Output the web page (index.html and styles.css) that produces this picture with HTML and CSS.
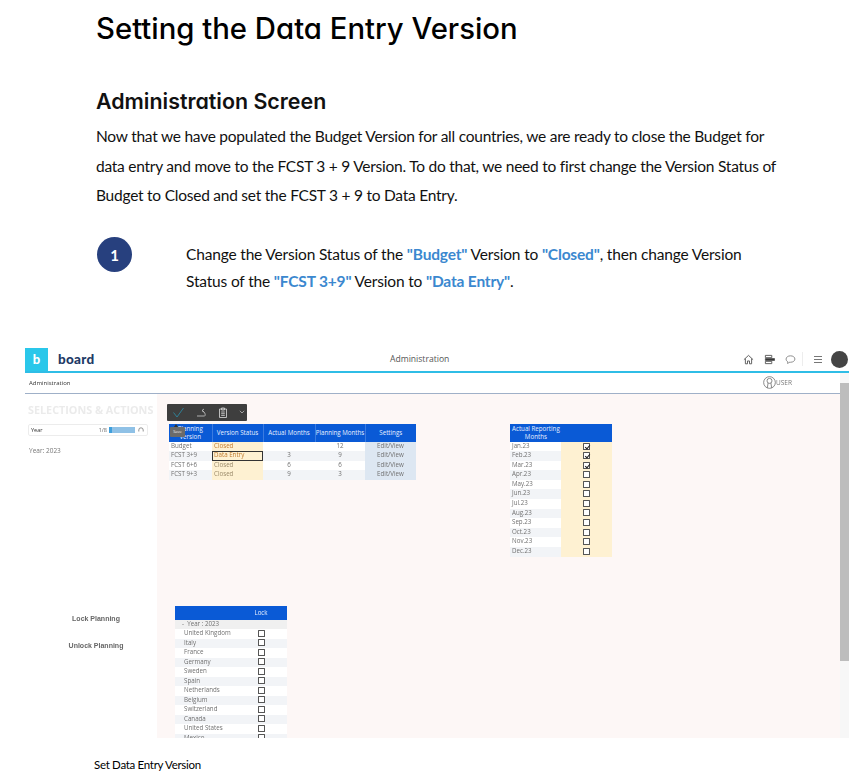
FILE: index.html
```html
<!DOCTYPE html>
<html lang="en">
<head>
    <meta charset="UTF-8">
    <meta name="viewport" content="width=device-width, initial-scale=1.0">
    <title>Setting the Data Entry Version</title>
    <link rel="stylesheet" href="styles.css">
</head>
<body>
    <div class="article">
        <h1>Setting the Data Entry Version</h1>
        <h2>Administration Screen</h2>
        <p class="intro">Now that we have populated the Budget Version for all countries, we are ready to close the Budget for data entry and move to the FCST 3 + 9 Version. To do that, we need to first change the Version Status of Budget to Closed and set the FCST 3 + 9 to Data Entry.</p>
        <div class="step">
            <div class="step-num">1</div>
            <p>Change the Version Status of the <b>"Budget"</b> Version to <b>"Closed"</b>, then change Version Status of the <b>"FCST 3+9"</b> Version to <b>"Data Entry"</b>.</p>
        </div>
    </div>

    <div class="shot">
        <div class="app-header">
            <div class="logo-box">b</div>
            <div class="logo-word">board</div>
            <div class="app-title">Administration</div>
            <div class="app-icons">
                <svg width="11" height="11" viewBox="0 0 12 12" fill="none" stroke="#555" stroke-width="1"><path d="M1 6.2 6 1.5l5 4.7M2.6 5v5.7h2.3V7.6h2.2v3.1h2.3V5"/></svg>
                <svg width="11" height="11" viewBox="0 0 12 12" fill="none" stroke="#555" stroke-width="1"><path d="M1.5 1.5h7v2.5h-7zM1.5 8h7v2.5h-7z"/><path d="M1.5 5h10v2h-10z" fill="#333"/></svg>
                <svg width="11" height="11" viewBox="0 0 12 12" fill="none" stroke="#777" stroke-width="0.9"><path d="M6 2c2.8 0 4.8 1.500 4.800 3.500S8.800 9 6 9H4.500L3 10.500V8.500C1.900 7.900 1.200 6.800 1.200 5.500 1.200 3.500 3.200 2 6 2z"/></svg>
                <span class="icon-sep"></span>
                <svg width="10" height="9" viewBox="0 0 10 9" fill="none" stroke="#777" stroke-width="1"><path d="M1 1.500h8M1 4.500h8M1 7.500h8"/></svg>
                <span class="avatar"></span>
            </div>
        </div>
        <div class="main-wrap">
            <div class="main-col">
                <div class="sub-bar">
                    <span>Administration</span>
                    <div class="user-tag">
                        <svg width="13" height="13" viewBox="0 0 12 12" fill="none" stroke="#666" stroke-width="0.7"><circle cx="6" cy="6" r="5.400"/><circle cx="6" cy="4.500" r="2.300"/><path d="M4.700 6.500 4 11M7.300 6.500 8 11"/></svg>
                        USER
                    </div>
                </div>
                <div class="dash">
                    <div class="side">
                        <div class="side-title">SELECTIONS &amp; ACTIONS</div>
                        <div class="selector">
                            <span class="sel-name">Year</span>
                            <span class="sel-count">1/8</span>
                            <span class="sel-bar"><i></i></span>
                            <svg width="6" height="6" viewBox="0 0 6 6" fill="none" stroke="#666" stroke-width="0.7"><path d="M0.800 4.500V3a2.200 2.200 0 0 1 4.400 0v1.500"/></svg>
                        </div>
                        <div class="sel-value">Year: 2023</div>
                        <div class="side-action first">Lock Planning</div>
                        <div class="side-action">Unlock Planning</div>
                    </div>
                    <div class="canvas">
                        <div class="canvas-left">
                            <div class="versions-wrap">
                                <div class="toolbar">
                                    <svg width="13" height="13" viewBox="0 0 13 13" fill="none" stroke="#2f7f95" stroke-width="1"><path d="M1.500 6.500 5 11l6.500-9"/></svg>
                                    <svg width="11" height="11" viewBox="0 0 11 11" fill="none" stroke="#bbb" stroke-width="0.9"><path d="M1 9h7.500c1 0 1-2.500-.5-4L6 3.500M6 3.500 8 2M6 3.500 8 5"/></svg>
                                    <svg width="10" height="11" viewBox="0 0 10 11" fill="none" stroke="#ccc" stroke-width="0.9"><path d="M1.500 2h7v8.500h-7zM3.500 1h3v2h-3zM3.200 5h3.600M3.200 6.700h3.600M3.200 8.400h3.600"/></svg>
                                    <svg width="6" height="4" viewBox="0 0 6 4" fill="none" stroke="#bbb" stroke-width="0.8"><path d="M0.800 0.800 3 3l2.200-2.200"/></svg>
                                </div>
                                <div class="tip">Save</div>
                                <table class="grid versions">
                                    <tr class="head"><th>Planning<br>Version</th><th>Version Status</th><th>Actual Months</th><th>Planning Months</th><th>Settings</th></tr>
                                    <tr><td>Budget</td><td class="status">Closed</td><td></td><td class="mid">12</td><td class="setting">Edit/View</td></tr>
                                    <tr class="alt"><td>FCST 3+9</td><td class="status active">Data Entry</td><td class="mid">3</td><td class="mid">9</td><td class="setting">Edit/View</td></tr>
                                    <tr><td>FCST 6+6</td><td class="status dim">Closed</td><td class="mid">6</td><td class="mid">6</td><td class="setting">Edit/View</td></tr>
                                    <tr class="alt"><td>FCST 9+3</td><td class="status dim">Closed</td><td class="mid">9</td><td class="mid">3</td><td class="setting">Edit/View</td></tr>
                                </table>
                            </div>
                            <table class="grid locks">
                                <tr class="head"><th></th><th>Lock</th></tr>
                                <tr class="year-row"><td colspan="2">- &nbsp;Year : 2023</td></tr>
                                <tr><td>United Kingdom</td><td class="mid"><span class="box"></span></td></tr>
                                <tr class="alt"><td>Italy</td><td class="mid"><span class="box"></span></td></tr>
                                <tr><td>France</td><td class="mid"><span class="box"></span></td></tr>
                                <tr class="alt"><td>Germany</td><td class="mid"><span class="box"></span></td></tr>
                                <tr><td>Sweden</td><td class="mid"><span class="box"></span></td></tr>
                                <tr class="alt"><td>Spain</td><td class="mid"><span class="box"></span></td></tr>
                                <tr><td>Netherlands</td><td class="mid"><span class="box"></span></td></tr>
                                <tr class="alt"><td>Belgium</td><td class="mid"><span class="box"></span></td></tr>
                                <tr><td>Switzerland</td><td class="mid"><span class="box"></span></td></tr>
                                <tr class="alt"><td>Canada</td><td class="mid"><span class="box"></span></td></tr>
                                <tr><td>United States</td><td class="mid"><span class="box"></span></td></tr>
                                <tr class="alt"><td>Mexico</td><td class="mid"><span class="box"></span></td></tr>
                            </table>
                        </div>
                        <table class="grid months">
                            <tr class="head"><th colspan="2"><span class="months-head">Actual Reporting<br>Months</span></th></tr>
                            <tr><td>Jan.23</td><td class="check"><span class="box on"></span></td></tr>
                            <tr class="alt"><td>Feb.23</td><td class="check"><span class="box on"></span></td></tr>
                            <tr><td>Mar.23</td><td class="check"><span class="box on"></span></td></tr>
                            <tr class="alt"><td>Apr.23</td><td class="check"><span class="box"></span></td></tr>
                            <tr><td>May.23</td><td class="check"><span class="box"></span></td></tr>
                            <tr class="alt"><td>Jun.23</td><td class="check"><span class="box"></span></td></tr>
                            <tr><td>Jul.23</td><td class="check"><span class="box"></span></td></tr>
                            <tr class="alt"><td>Aug.23</td><td class="check"><span class="box"></span></td></tr>
                            <tr><td>Sep.23</td><td class="check"><span class="box"></span></td></tr>
                            <tr class="alt"><td>Oct.23</td><td class="check"><span class="box"></span></td></tr>
                            <tr><td>Nov.23</td><td class="check"><span class="box"></span></td></tr>
                            <tr class="alt"><td>Dec.23</td><td class="check"><span class="box"></span></td></tr>
                        </table>
                    </div>
                </div>
            </div>
            <div class="scrollbar"><div class="scroll-up"></div><div class="scroll-thumb"></div></div>
        </div>
    </div>

    <div class="caption">Set Data Entry Version</div>
</body>
</html>
```

FILE: styles.css
```css
* {
    margin: 0;
    padding: 0;
    box-sizing: border-box;
}

body {
    font-family: 'Lato', Arial, sans-serif;
    background-color: #ffffff;
    color: #111111;
    width: 868px;
    height: 784px;
    overflow: hidden;
}

/* article text */
.article {
    padding: 11px 0 0 96px;
    width: 780px;
}

h1 {
    font-family: 'Inter', Arial, sans-serif;
    font-feature-settings: "cv11";
    font-size: 29.3px;
    font-weight: 500;
    line-height: 36px;
    color: #000000;
}

h2 {
    font-family: 'Inter', Arial, sans-serif;
    font-feature-settings: "cv11";
    font-size: 21.4px;
    font-weight: 600;
    line-height: 28px;
    margin-top: 40px;
    color: #111111;
}

.intro {
    font-size: 15.5px;
    letter-spacing: -0.24px;
    line-height: 29.5px;
    margin-top: 7px;
}

.step {
    display: flex;
    margin-top: 26px;
    padding-left: 1px;
}

.step-num {
    width: 35px;
    height: 35px;
    border-radius: 50%;
    background-color: #27407e;
    color: #ffffff;
    font-weight: 700;
    font-size: 15px;
    line-height: 36px;
    text-align: center;
    flex-shrink: 0;
}

.step p {
    margin-left: 54px;
    width: 580px;
    font-size: 15.5px;
    letter-spacing: -0.17px;
    line-height: 27px;
    padding-top: 4px;
}

.step b {
    color: #3b88cf;
}

/* screenshot of the app */
.shot {
    margin: 53px 0 0 25px;
    width: 824px;
    height: 390px;
    overflow: hidden;
    font-family: 'Open Sans', Arial, sans-serif;
    filter: blur(0.45px);
    color: #666666;
}

.app-header {
    height: 25px;
    display: flex;
    align-items: center;
    border-bottom: 2px solid #2fbde6;
    background-color: #ffffff;
}

.logo-box {
    width: 23px;
    height: 23px;
    background-color: #2ac7ea;
    color: #ffffff;
    font-family: 'Lato', Arial, sans-serif;
    font-weight: 900;
    font-size: 13px;
    line-height: 22px;
    text-align: center;
}

.logo-word {
    width: 125px;
    padding-left: 10px;
    font-family: 'Lato', Arial, sans-serif;
    font-weight: 900;
    font-size: 13.5px;
    letter-spacing: 0.3px;
    color: #1e3a66;
}

.app-title {
    margin-left: 217px;
    font-size: 8.6px;
    color: #555555;
    width: 60px;
    white-space: nowrap;
}

.app-icons {
    margin-left: auto;
    display: flex;
    align-items: center;
    gap: 10px;
    padding-right: 1px;
}

.icon-sep {
    width: 1px;
    height: 14px;
    background-color: #ededed;
    margin-left: -4px;
}

.avatar {
    width: 17px;
    height: 17px;
    border-radius: 50%;
    background-color: #444444;
    margin-left: -2px;
}

.main-wrap {
    display: flex;
    height: 365px;
}

.main-col {
    width: 815px;
    flex-shrink: 0;
}

.sub-bar {
    height: 21px;
    display: flex;
    align-items: center;
    justify-content: space-between;
    padding: 0 48px 0 4px;
    font-size: 6px;
    color: #333333;
    border-bottom: 1px solid #9fb0c8;
}

.user-tag {
    display: flex;
    align-items: center;
    gap: 0;
    font-size: 6.5px;
    color: #777777;
}

.dash {
    display: flex;
    height: 344px;
}

.side {
    width: 132px;
    padding: 9px 0 0 3px;
    flex-shrink: 0;
}

.side-title {
    font-size: 10.8px;
    font-weight: 700;
    line-height: 14px;
    color: #ebebeb;
    white-space: nowrap;
}

.selector {
    width: 120px;
    height: 12px;
    margin-top: 7px;
    border: 1px solid #ececec;
    border-radius: 2px;
    display: flex;
    align-items: center;
    padding: 0 3px 0 2px;
    font-size: 5.5px;
}

.sel-name {
    color: #333333;
}

.sel-count {
    margin-left: auto;
}

.sel-bar {
    width: 26px;
    height: 6px;
    margin: 0 3px 0 2px;
    background-color: #8fc1e6;
}

.sel-bar i {
    display: block;
    width: 3px;
    height: 6px;
    background-color: #3f9fdc;
}

.sel-value {
    margin: 10px 0 0 1px;
    font-size: 6.5px;
    line-height: 10px;
    color: #777777;
}

.side-action {
    width: 136px;
    font-family: 'Liberation Sans', Arial, sans-serif;
    font-size: 7px;
    font-weight: 700;
    line-height: 10px;
    text-align: center;
    margin-top: 17px;
}

.side-action.first {
    margin-top: 158px;
}

.canvas {
    flex: 1;
    background-color: #fdf7f6;
    display: flex;
    padding: 30px 0 0 12px;
}

.canvas-left {
    width: 247px;
}

.versions-wrap {
    position: relative;
}

.toolbar {
    position: absolute;
    left: -2px;
    top: -20px;
    width: 80px;
    height: 17px;
    background-color: #3e3e3e;
    border-radius: 1px;
    display: flex;
    align-items: center;
    padding-left: 5px;
    gap: 11px;
}

.tip {
    position: absolute;
    left: 1px;
    top: 3px;
    width: 15px;
    height: 10px;
    background-color: #6b6b6b;
    border-radius: 1px;
    color: #eeeeee;
    font-size: 4px;
    line-height: 10px;
    text-align: center;
}

.tip::before {
    content: "";
    position: absolute;
    left: 4px;
    top: -3px;
    border-left: 2px solid transparent;
    border-right: 2px solid transparent;
    border-bottom: 3px solid #333333;
}

.grid {
    border-collapse: collapse;
    table-layout: fixed;
    font-size: 6.2px;
    color: #707070;
}

.grid td {
    height: 9.5px;
    line-height: 8.5px;
    padding: 0 2px 1px;
    background-color: #ffffff;
    white-space: nowrap;
    overflow: hidden;
}

.grid .alt td {
    background-color: #f2f4f7;
}

.grid th {
    background-color: #0a5ad6;
    color: #e8f0ff;
    font-weight: 400;
    line-height: 8px;
    padding: 0;
    white-space: nowrap;
}

.versions th {
    border-right: 1px solid #3b7be0;
}

.versions th:last-child {
    border-right: none;
}

.grid .mid {
    text-align: center;
}

.versions {
    width: 247px;
}

.versions .head th {
    height: 18px;
}

.versions th:nth-child(1) { width: 43px; }
.versions th:nth-child(2) { width: 51px; }
.versions th:nth-child(3) { width: 52px; }
.versions th:nth-child(4) { width: 50px; }
.versions th:nth-child(5) { width: 51px; }

.grid td.status,
.grid .alt td.status {
    background-color: #fef1d2;
    color: #c07a2e;
}

.grid td.status.dim,
.grid .alt td.status.dim {
    color: #9a8a6a;
}

.grid td.status.active,
.grid .alt td.status.active {
    outline: 1px solid #333333;
    outline-offset: -1px;
}

.grid td.setting,
.grid .alt td.setting {
    background-color: #dde7f2;
    text-align: center;
}

.locks {
    width: 112px;
    margin: 126px 0 0 6px;
}

.locks .head th {
    height: 14px;
}

.locks th:nth-child(1) { width: 60px; }
.locks th:nth-child(2) { width: 52px; }

.locks td:first-child {
    padding-left: 9px;
}

.locks .year-row td {
    background-color: #f0f0f0;
    padding-left: 7px;
}

.months {
    width: 102px;
    height: 133px;
    margin-left: 94px;
    align-self: flex-start;
}

.months .head th {
    height: 18px;
    text-align: left;
}

.months-head {
    display: inline-block;
    padding-left: 2px;
    text-align: center;
}

.months td {
    width: 51px;
}

.grid td.check,
.grid .alt td.check {
    background-color: #fef1d2;
    text-align: center;
}

.box {
    display: inline-block;
    position: relative;
    width: 7px;
    height: 7px;
    border: 1px solid #555555;
    border-radius: 0.5px;
    background-color: #ffffff;
    vertical-align: middle;
}

.box.on::after {
    content: "";
    position: absolute;
    left: 1.5px;
    top: 0;
    width: 2px;
    height: 4px;
    border-right: 1px solid #222222;
    border-bottom: 1px solid #222222;
    transform: rotate(40deg);
}

.scrollbar {
    width: 9px;
    background-color: #f7f7f7;
}

.scroll-up {
    height: 10px;
}

.scroll-thumb {
    height: 278px;
    background-color: #bdbdbd;
}

.caption {
    margin: 20px 0 0 94px;
    font-size: 11.5px;
    line-height: 14px;
    letter-spacing: -0.3px;
    color: #000000;
}
```
